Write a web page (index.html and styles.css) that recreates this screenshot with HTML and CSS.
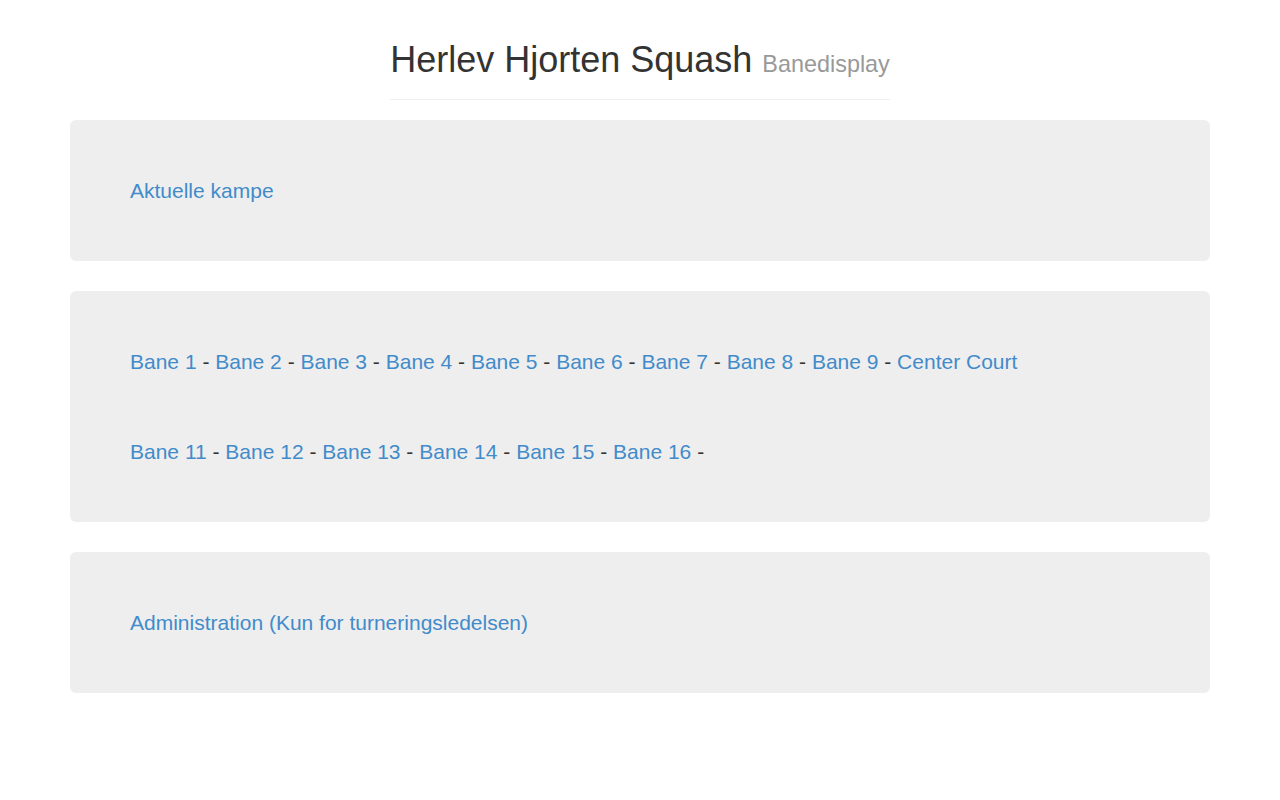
FILE: index.html
```html
<!DOCTYPE html>
<html lang="da">
<head>
<meta charset="utf-8">
<title>Herlev Hjorten Squash - Banedisplay</title>
<link rel="stylesheet" href="styles.css">
</head>
<body>
<div class="container">
  <div class="header-wrap">
    <div class="page-header">
      <h1>Herlev Hjorten Squash <small>Banedisplay</small></h1>
    </div>
  </div>

  <div class="jumbotron">
    <p class="row"><a href="#">Aktuelle kampe</a></p>
  </div>

  <div class="jumbotron">
    <div class="rows">
      <p class="row"><a href="#">Bane 1</a> - <a href="#">Bane 2</a> - <a href="#">Bane 3</a> - <a href="#">Bane 4</a> - <a href="#">Bane 5</a> - <a href="#">Bane 6</a> - <a href="#">Bane 7</a> - <a href="#">Bane 8</a> - <a href="#">Bane 9</a> - <a href="#">Center Court</a></p>
      <p class="row"><a href="#">Bane 11</a> - <a href="#">Bane 12</a> - <a href="#">Bane 13</a> - <a href="#">Bane 14</a> - <a href="#">Bane 15</a> - <a href="#">Bane 16</a> -</p>
    </div>
  </div>

  <div class="jumbotron">
    <p class="row"><a href="#">Administration (Kun for turneringsledelsen)</a></p>
  </div>
</div>
</body>
</html>
```

FILE: styles.css
```css
* {
  box-sizing: border-box;
}

html, body {
  margin: 0;
  padding: 0;
  background: #fff;
}

body {
  font-family: "Liberation Sans", Arial, "Helvetica Neue", Helvetica, sans-serif;
  font-size: 14px;
  line-height: 1.428571;
  color: #333;
}

.container {
  width: 1170px;
  margin: 0 auto;
  padding: 0 15px;
}

.header-wrap {
  text-align: center;
  padding-top: 40px;
  margin-bottom: 20px;
}

.page-header {
  display: inline-block;
  text-align: left;
  padding-bottom: 9px;
  border-bottom: 1px solid #eee;
}

.page-header h1 {
  margin: 0 0 10px;
  font-size: 36px;
  font-weight: 500;
  line-height: 1.1;
  color: #333;
}

.page-header h1 small {
  font-size: 65%;
  font-weight: normal;
  line-height: 1;
  color: #999;
}

.jumbotron {
  background: #eee;
  border-radius: 6px;
  padding: 48px 60px;
  margin-bottom: 30px;
}

.rows {
  display: flex;
  flex-direction: column;
  gap: 45px;
}

.row {
  margin: 0;
  padding: 8px 0 7px;
  font-size: 21px;
  font-weight: 200;
  line-height: 30px;
  color: #333;
}

a {
  color: #428bca;
  text-decoration: none;
}
```
